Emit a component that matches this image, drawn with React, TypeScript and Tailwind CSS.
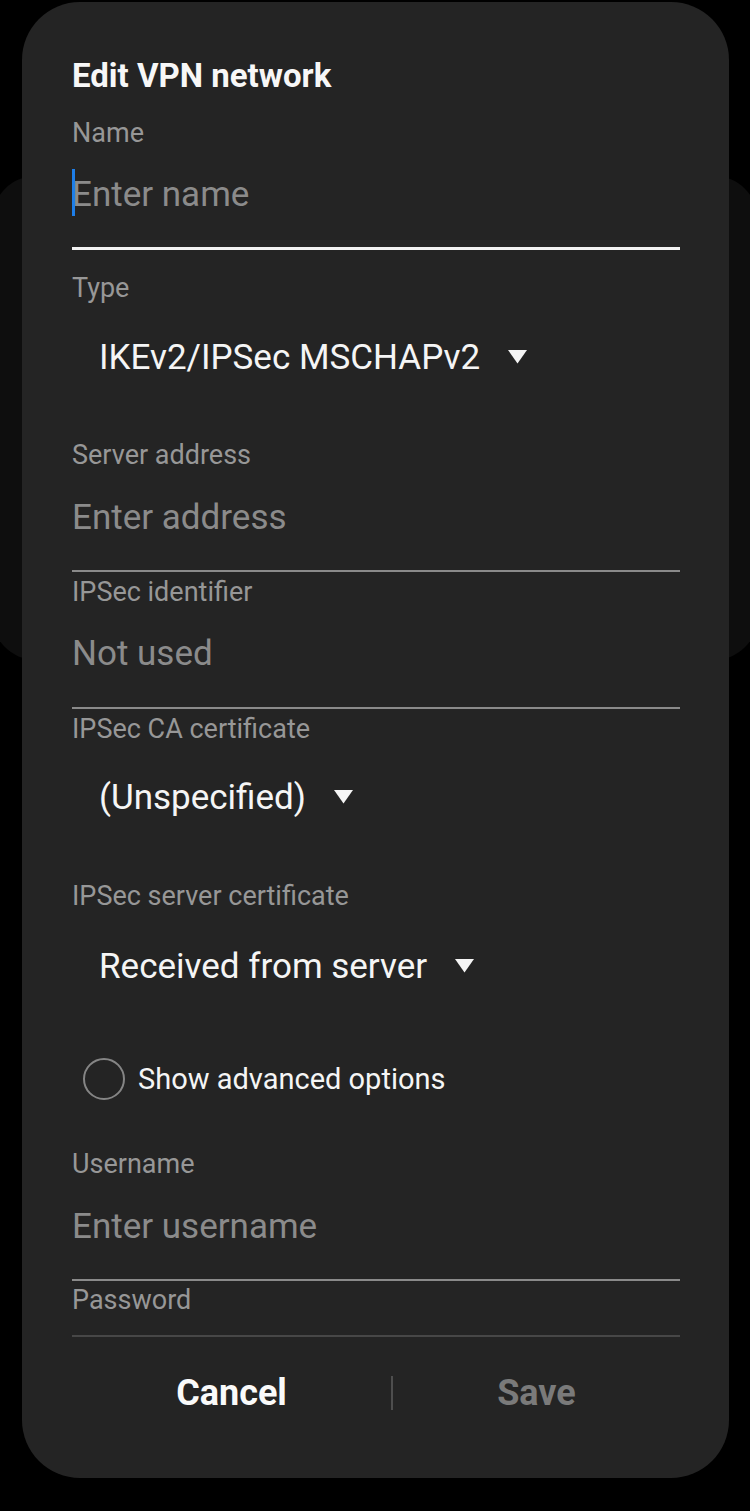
import React from "react";

const Caret = () => (
  <svg width="21" height="15" viewBox="0 0 21 15" className="ml-[27px] mt-[-2px] shrink-0">
    <polygon points="1,1 20,1 10.5,14.5" fill="#f5f5f5" />
  </svg>
);

const Label = ({ text, className = "" }: { text: string; className?: string }) => (
  <p className={`text-[27px] leading-none text-[#979797] ${className}`}>{text}</p>
);

const Placeholder = ({ text, className = "" }: { text: string; className?: string }) => (
  <p className={`text-[35px] leading-none text-[#8b8b8b] ${className}`}>{text}</p>
);

const SelectValue = ({ text, className = "" }: { text: string; className?: string }) => (
  <div className={`flex items-center pl-[27px] ${className}`}>
    <span className="text-[35px] leading-none text-[#f5f5f5]">{text}</span>
    <Caret />
  </div>
);

const App = () => {
  return (
    <div
      className="relative h-[1511px] w-[750px] overflow-hidden bg-black"
      style={{ fontFamily: "Roboto, 'Liberation Sans', sans-serif" }}
    >
      {/* dimmed screen behind the dialog */}
      <div className="absolute left-[-8px] top-[176px] h-[484px] w-[766px] rounded-[44px] bg-[#0e0e0e]" />

      <div className="relative ml-[22px] mt-[2px] flex h-[1476px] w-[707px] flex-col rounded-[58px] bg-[#242424] pl-[50px] pr-[49px] pt-[57px]">
        <h1 className="text-[33px] font-bold leading-none text-[#f7f7f7]">Edit VPN network</h1>

        <Label text="Name" className="mt-[28px]" />
        <div className="relative mt-[30px]">
          <span className="absolute left-0 top-[-8px] h-[47px] w-[3px] bg-[#1e7ee8]" />
          <Placeholder text="Enter name" />
        </div>
        <div className="mt-[35px] h-[3px] bg-[#f2f2f2]" />

        <Label text="Type" className="mt-[25px]" />
        <SelectValue text="IKEv2/IPSec MSCHAPv2" className="mt-[38px]" />

        <Label text="Server address" className="mt-[67px]" />
        <Placeholder text="Enter address" className="mt-[31px]" />
        <div className="mt-[35px] h-[2px] bg-[#8a8a8a]" />

        <Label text="IPSec identifier" className="mt-[7px]" />
        <Placeholder text="Not used" className="mt-[30px]" />
        <div className="mt-[36px] h-[2px] bg-[#8a8a8a]" />

        <Label text="IPSec CA certificate" className="mt-[7px]" />
        <SelectValue text="(Unspecified)" className="mt-[37px]" />

        <Label text="IPSec server certificate" className="mt-[68px]" />
        <SelectValue text="Received from server" className="mt-[39px]" />

        <div className="mt-[74px] flex items-center pl-[11px]">
          <span className="h-[42px] w-[42px] rounded-full border-2 border-[#858585]" />
          <span className="ml-[13px] text-[29px] leading-none text-[#f5f5f5]">Show advanced options</span>
        </div>

        <Label text="Username" className="mt-[51px]" />
        <Placeholder text="Enter username" className="mt-[31px]" />
        <div className="mt-[35px] h-[2px] bg-[#8a8a8a]" />

        <Label text="Password" className="mt-[6px]" />
        <div className="mt-[21px] h-[2px] bg-[#474747]" />

        <div className="mt-[38px] flex h-[36px] items-center">
          <button className="w-[319px] text-center text-[36px] font-bold leading-none text-[#fafafa]">Cancel</button>
          <span className="h-[34px] w-[2px] bg-[#4e4e4e]" />
          <button className="flex-1 text-center text-[36px] font-bold leading-none text-[#7a7a7a]">Save</button>
        </div>
      </div>
    </div>
  );
};

export default App;
